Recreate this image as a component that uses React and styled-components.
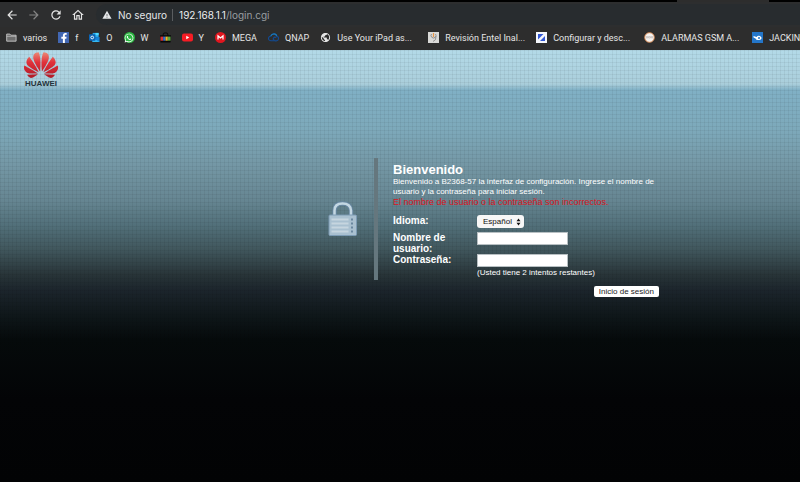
import React from 'react';
import styled, { createGlobalStyle } from 'styled-components';
import { FaFacebookF, FaWhatsapp } from 'react-icons/fa';
import { MdArrowBack, MdArrowForward, MdRefresh, MdOutlineHome, MdWarning, MdPublic } from 'react-icons/md';

const FolderIcon = () => (
  <svg viewBox='0 0 24 22' aria-hidden='true'>
    <path d='M1.5 19V3.5h7l2 2.5h11.5v13z' fill='#6d6d6d' stroke='#c4c4c4' strokeWidth='2' />
    <path d='M1.5 8.5h20.5' stroke='#c4c4c4' strokeWidth='1.5' />
  </svg>
);

const OutlookIcon = () => (
  <svg viewBox='0 0 24 22' aria-hidden='true'>
    <path d='M8 1h13v10H8z' fill='#28a8ea' />
    <path d='M14 1h7v5h-7z' fill='#50d9ff' />
    <path d='M7 11l16 -1v11H7z' fill='#1684d8' />
    <path d='M7 11l16 10H8z' fill='#35b8f1' />
    <rect x='0' y='4' width='14' height='14' rx='1' fill='#0a64b5' />
    <circle cx='7' cy='11' r='3' fill='none' stroke='#fff' strokeWidth='2' />
  </svg>
);

const ShoppingIcon = () => (
  <svg viewBox='0 0 24 22' aria-hidden='true'>
    <path d='M7 8V3q0-2 5-2t5 2v5' fill='none' stroke='#080808' strokeWidth='2' />
    <path d='M0 6h24l-1 16H1z' fill='#080808' />
    <path d='M1 9h6v9H1z' fill='#d93232' />
    <path d='M7 9h5v9H7z' fill='#2e73dc' />
    <path d='M12 9h5v9h-5z' fill='#f1b82b' />
    <path d='M17 9h6v9h-6z' fill='#5ba743' />
  </svg>
);

const YoutubeIcon = () => (
  <svg viewBox='0 0 22 22' aria-hidden='true'>
    <rect x='0' y='3' width='22' height='16' rx='4' fill='#f61c24' />
    <path d='M8.5 7.5v7l6 -3.5z' fill='#fff' />
  </svg>
);

const MegaIcon = () => (
  <svg viewBox='0 0 22 22' aria-hidden='true'>
    <circle cx='11' cy='11' r='11' fill='#e1161f' />
    <path d='M6 15V7.5l5 4.5 5-4.5V15' fill='none' stroke='#fff' strokeWidth='2.4' />
  </svg>
);

const CloudIcon = () => (
  <svg viewBox='0 0 24 22' fill='none' aria-hidden='true'>
    <path d='M14 18H6q-5-1-5-5t5-5q2-5 7-5 5 0 6 5 4 1 4 5t-4 5q-4 1-5-1' stroke='#124b94' strokeWidth='2.4' />
    <path d='M6 8q2-5 7-5 5 0 6 5' stroke='#1b78b6' strokeWidth='2.4' />
    <path d='M18 11q-4-2-6 1t2 5' stroke='#124b94' strokeWidth='2.4' />
  </svg>
);

const EntelIcon = () => (
  <svg viewBox='0 0 22 22' aria-hidden='true'>
    <rect width='22' height='22' fill='#d9d9d7' />
    <path d='M7 4a5 5 0 1 0 8 0M16 8q1 9-6 11' fill='none' stroke='#909090' strokeWidth='2' />
    <path d='M11 2v8' stroke='#e89546' strokeWidth='2.4' />
  </svg>
);

const SetupIcon = () => (
  <svg viewBox='0 0 22 22' aria-hidden='true'>
    <rect width='22' height='22' fill='#f5f7fc' />
    <path d='M4 4h11L4 15z' fill='#3157d5' />
    <path d='M18 8v10H8z' fill='#3157d5' />
  </svg>
);

const AlarmIcon = () => (
  <svg viewBox='0 0 24 24' aria-hidden='true'>
    <circle cx='12' cy='12' r='10.5' fill='#f4f1ef' stroke='#d9874e' strokeWidth='2' />
    <path d='M5 10h3v3H5zM10 10h4v3h-4zM16 10h3v3h-3z' fill='none' stroke='#bcb6b4' strokeWidth='1.5' />
  </svg>
);

const JackIcon = () => (
  <svg viewBox='0 0 22 22' aria-hidden='true'>
    <rect width='22' height='22' fill='#2476c9' />
    <path d='M3 8l6 2q3-4 7-2 4 2 3 5-2 4-7 3-4 0-5-3l-4-2z' fill='#fff' />
    <circle cx='14' cy='12' r='2' fill='#2476c9' />
  </svg>
);

const FacebookIcon = () => (
  <FacebookTile>
    <FaFacebookF />
  </FacebookTile>
);

const WhatsappIcon = () => (
  <WhatsappTile>
    <FaWhatsapp />
  </WhatsappTile>
);

const petals = [
  'M3.67 6.14S1.82 7.91 1.72 9.78v.35c.08 1.51 1.22 2.4 1.22 2.4 1.83 1.79 6.26 4.04 7.3 4.55 0 0 .06.03.1-.01l.02-.08C7.52 10.8 3.67 6.14 3.67 6.14z',
  'M9.65 18.6l-.1-.08-7.38.26c.8 1.43 2.15 2.53 3.56 2.2.96-.25 3.16-1.78 3.88-2.3z',
  'M9.73 17.82C6.49 15.63.21 12.28.21 12.28c-.15.46-.2.9-.21 1.3v.07c0 1.07.4 1.82.4 1.82.8 1.69 2.34 2.2 2.34 2.2.7.3 1.4.31 1.4.31.12.02 4.4 0 5.54 0z',
  'M9.06 3.19a3.42 3.42 0 0 0-2.57 3.15v.41c.03.6.16 1.05.16 1.05.66 2.9 3.86 7.65 4.55 8.65l.16-.07c1.06-10.6-1.11-13.42-1.11-13.42-.32.02-1.19.23-1.19.23z',
];

const HuaweiLogo = () => (
  <svg width='36' height='36' viewBox='0 0 36 36' role='img' aria-label='Huawei'>
    <defs>
      <linearGradient id='petal' gradientUnits='userSpaceOnUse' x1='0' y1='3' x2='0' y2='21'>
        <stop offset='0' stopColor='#ea8a76' />
        <stop offset='0.4' stopColor='#e0303a' />
        <stop offset='1' stopColor='#b01c28' />
      </linearGradient>
    </defs>
    <g fill='url(#petal)' transform='translate(1 -3) scale(1.42)'>
      {petals.map((d) => (
        <path key={d} d={d} />
      ))}
      <g transform='matrix(-1 0 0 1 24 0)'>
        {petals.map((d) => (
          <path key={d} d={d} />
        ))}
      </g>
    </g>
    <text x='18' y='35' textAnchor='middle' fontFamily='Liberation Sans, sans-serif' fontSize='8' fontWeight='700' fill='#25343c'>
      HUAWEI
    </text>
  </svg>
);

const Padlock = () => (
  <svg width='30' height='36' viewBox='0 0 60 72' aria-hidden='true'>
    <path d='M13 30V19Q13 5 29 5t17 14v11' fill='none' stroke='#6686a0' strokeWidth='9' />
    <path d='M13 30V19Q13 5 29 5t17 14v11' fill='none' stroke='#c3d7e2' strokeWidth='5' />
    <rect x='2' y='28' width='55' height='41' rx='2' fill='#a9c0d0' stroke='#7c9bb4' strokeWidth='2' />
    <path d='M7 37h34M7 45h34M7 53h34M7 61h34' stroke='#c6d5df' strokeWidth='4' />
    <path d='M48 35v30' stroke='#6b88a0' strokeWidth='4' strokeDasharray='4 4' />
  </svg>
);

const bookmarks = [
  { label: 'varios', Icon: FolderIcon },
  { label: 'f', Icon: FacebookIcon },
  { label: 'O', Icon: OutlookIcon },
  { label: 'W', Icon: WhatsappIcon },
  { label: '', name: 'Tienda', Icon: ShoppingIcon },
  { label: 'Y', Icon: YoutubeIcon },
  { label: 'MEGA', Icon: MegaIcon },
  { label: 'QNAP', Icon: CloudIcon },
  { label: 'Use Your iPad as...', Icon: MdPublic, wide: true },
  { label: 'Revisión Entel Inal...', Icon: EntelIcon, wide: true },
  { label: 'Configurar y desc...', Icon: SetupIcon, wide: true },
  { label: 'ALARMAS GSM A...', Icon: AlarmIcon, wide: true },
  { label: 'JACKIN', Icon: JackIcon },
];

const App = () => {
  const [language, setLanguage] = React.useState('es');
  const [username, setUsername] = React.useState('');
  const [password, setPassword] = React.useState('');

  return (
    <Window>
      <GlobalStyle />
      <TabStrip>
        <ActiveTab />
      </TabStrip>
      <Toolbar>
        <NavButton type='button' aria-label='Atrás'>
          <MdArrowBack />
        </NavButton>
        <NavButton type='button' aria-label='Adelante' disabled>
          <MdArrowForward />
        </NavButton>
        <NavButton type='button' aria-label='Recargar'>
          <MdRefresh />
        </NavButton>
        <NavButton type='button' aria-label='Inicio'>
          <MdOutlineHome />
        </NavButton>
        <AddressBar>
          <MdWarning />
          <Security>No seguro</Security>
          <Url>
            <Host>192.168.1.1</Host>/login.cgi
          </Url>
        </AddressBar>
      </Toolbar>
      <Bookmarks>
        {bookmarks.map(({ label, name, Icon, wide }) => (
          <Bookmark key={label || name} href='#' aria-label={name}>
            <Icon />
            {label && <BookmarkLabel $wide={wide}>{label}</BookmarkLabel>}
          </Bookmark>
        ))}
      </Bookmarks>
      <Page>
        <Header>
          <HuaweiLogo />
        </Header>
        <Login>
          <LockColumn>
            <Padlock />
          </LockColumn>
          <Form onSubmit={(ev) => ev.preventDefault()}>
            <Title>Bienvenido</Title>
            <Intro>
              Bienvenido a B2368-57 la interfaz de configuración. Ingrese el nombre de usuario y la contraseña para
              iniciar sesión.
            </Intro>
            <ErrorText role='alert'>El nombre de usuario o la contraseña son incorrectos.</ErrorText>
            <Fields>
              <Label htmlFor='language'>Idioma:</Label>
              <SelectWrapper>
                <Select id='language' value={language} onChange={(ev) => setLanguage(ev.target.value)}>
                  <option value='es'>Español</option>
                </Select>
                <Arrows viewBox='0 0 10 16' aria-hidden='true'>
                  <path d='M5 1l4 5.5H1zM5 15l4-5.5H1z' fill='#111' />
                </Arrows>
              </SelectWrapper>
              <Label htmlFor='username'>Nombre de usuario:</Label>
              <Input id='username' type='text' value={username} onChange={(ev) => setUsername(ev.target.value)} />
              <Label htmlFor='password'>Contraseña:</Label>
              <PasswordCell>
                <Input id='password' type='password' value={password} onChange={(ev) => setPassword(ev.target.value)} />
                <Attempts>(Usted tiene 2 intentos restantes)</Attempts>
              </PasswordCell>
            </Fields>
            <Submit type='submit'>Inicio de sesión</Submit>
          </Form>
        </Login>
      </Page>
    </Window>
  );
};

const GlobalStyle = createGlobalStyle`
  * {
    box-sizing: border-box;
  }

  body {
    margin: 0;
    background: #000;
    font-family: 'Liberation Sans', Arial, sans-serif;
  }
`;

const Window = styled.div`
  display: flex;
  flex-direction: column;
  min-height: 100vh;
  overflow: hidden;
`;

const TabStrip = styled.div`
  display: flex;
  justify-content: flex-end;
  height: 2px;
  padding-right: 31px;
  background: #000;
`;

const ActiveTab = styled.div`
  width: 92px;
  background: #2d2d2d;
`;

const Toolbar = styled.div`
  display: flex;
  align-items: center;
  gap: 8px;
  height: 25px;
  padding-left: 5px;
  background: #2d2e2f;
  font-family: Inter, sans-serif;
`;

const NavButton = styled.button`
  display: flex;
  padding: 0;
  border: none;
  background: none;
  color: #e4e4e4;
  font-size: 14px;

  &:disabled {
    color: #858585;
  }
`;

const AddressBar = styled.div`
  display: flex;
  flex: 1;
  align-items: center;
  height: 21px;
  margin-left: 3px;
  padding-left: 6px;
  border-radius: 11px 0 0 11px;
  background: #282c2f;
  color: #e4e6e8;
  font-size: 10px;
`;

const Security = styled.span`
  margin-left: 6px;
  padding-right: 5px;
  border-right: 1px solid #5a5d60;
`;

const Url = styled.span`
  margin-left: 6px;
  color: #999da0;
`;

const Host = styled.span`
  color: #eceeef;
`;

const Bookmarks = styled.nav`
  display: flex;
  gap: 11px;
  height: 23px;
  padding: 0 0 2px 6px;
  overflow: hidden;
  background: #2d2d2d;
  font-family: Roboto, sans-serif;
`;

const Bookmark = styled.a`
  display: flex;
  flex: none;
  align-items: center;
  gap: 6px;
  color: #e6e6e6;
  font-size: 9px;
  text-decoration: none;

  > svg {
    flex: none;
    width: 11px;
    height: 11px;
  }
`;

const BookmarkLabel = styled.span`
  width: ${(props) => (props.$wide ? '80px' : 'auto')};
  white-space: nowrap;
`;

const FacebookTile = styled.span`
  display: flex;
  align-items: flex-end;
  justify-content: flex-end;
  width: 11px;
  height: 11px;
  background: #4267b2;
  color: #fff;
  font-size: 10px;
`;

const WhatsappTile = styled.span`
  display: flex;
  align-items: center;
  justify-content: center;
  width: 11px;
  height: 11px;
  border-radius: 50%;
  background: #2bb741;
  color: #fff;
  font-size: 10px;
`;

const Page = styled.main`
  flex: 1;
  background:
    repeating-linear-gradient(90deg, rgba(0, 0, 0, 0.05) 0 1px, transparent 1px 4px),
    repeating-linear-gradient(rgba(0, 0, 0, 0.05) 0 1px, transparent 1px 4px),
    linear-gradient(
      #b3dae8 0,
      #aacedb 34px,
      #80b0c5 40px,
      #7da9ba 80px,
      #7497a5 115px,
      #668692 150px,
      #52707a 175px,
      #40565c 200px,
      #283438 225px,
      #1c252c 240px,
      #0f171a 265px,
      #050a0b 290px,
      #030406 350px,
      #020304 432px
    );
`;

const Header = styled.header`
  height: 40px;
  padding: 1px 23px;
`;

const Login = styled.section`
  display: flex;
  max-width: 350px;
  margin: 68px 0 0 41%;
  color: #fff;
`;

const LockColumn = styled.div`
  display: flex;
  flex: none;
  align-items: center;
  width: 50px;
  height: 122px;
  border-right: 4px solid #65777e;
`;

const Form = styled.form`
  flex: 1;
  padding: 4px 0 0 15px;
`;

const Title = styled.h1`
  margin: 0;
  font-size: 13px;
  line-height: 15px;
`;

const Intro = styled.p`
  margin: 0;
  font-size: 8px;
  line-height: 10px;
`;

const ErrorText = styled.p`
  margin: 0;
  color: #d81420;
  font-size: 9px;
  line-height: 10px;
`;

const Fields = styled.div`
  display: grid;
  grid-template-columns: 84px auto;
  justify-items: start;
  align-items: start;
  margin-top: 8px;
`;

const Label = styled.label`
  max-width: 70px;
  font-size: 10px;
  font-weight: 700;
  line-height: 11px;
`;

const SelectWrapper = styled.div`
  position: relative;
  height: 17px;
`;

const Select = styled.select`
  display: block;
  width: 47px;
  height: 13px;
  padding: 0 6px;
  border: none;
  border-radius: 3px;
  appearance: none;
  background: #f7f7f7;
  color: #111;
  font: 8px 'Liberation Sans', sans-serif;
`;

const Arrows = styled.svg`
  position: absolute;
  top: 3px;
  right: 3px;
  width: 5px;
  height: 8px;
  pointer-events: none;
`;

const Input = styled.input`
  display: block;
  width: 91px;
  height: 13px;
  padding: 0 2px;
  border: 1px solid #b8c0c3;
  background: #fff;
  font: 9px 'Liberation Sans', sans-serif;
`;

const PasswordCell = styled.div`
  font-size: 8px;
`;

const Attempts = styled.div`
  line-height: 12px;
`;

const Submit = styled.button`
  display: block;
  height: 11px;
  margin: 7px 19px 0 auto;
  padding: 0 5px;
  border: none;
  border-radius: 2px;
  background: #fff;
  color: #222;
  font: 8px 'Liberation Sans', sans-serif;
`;

export default App;
